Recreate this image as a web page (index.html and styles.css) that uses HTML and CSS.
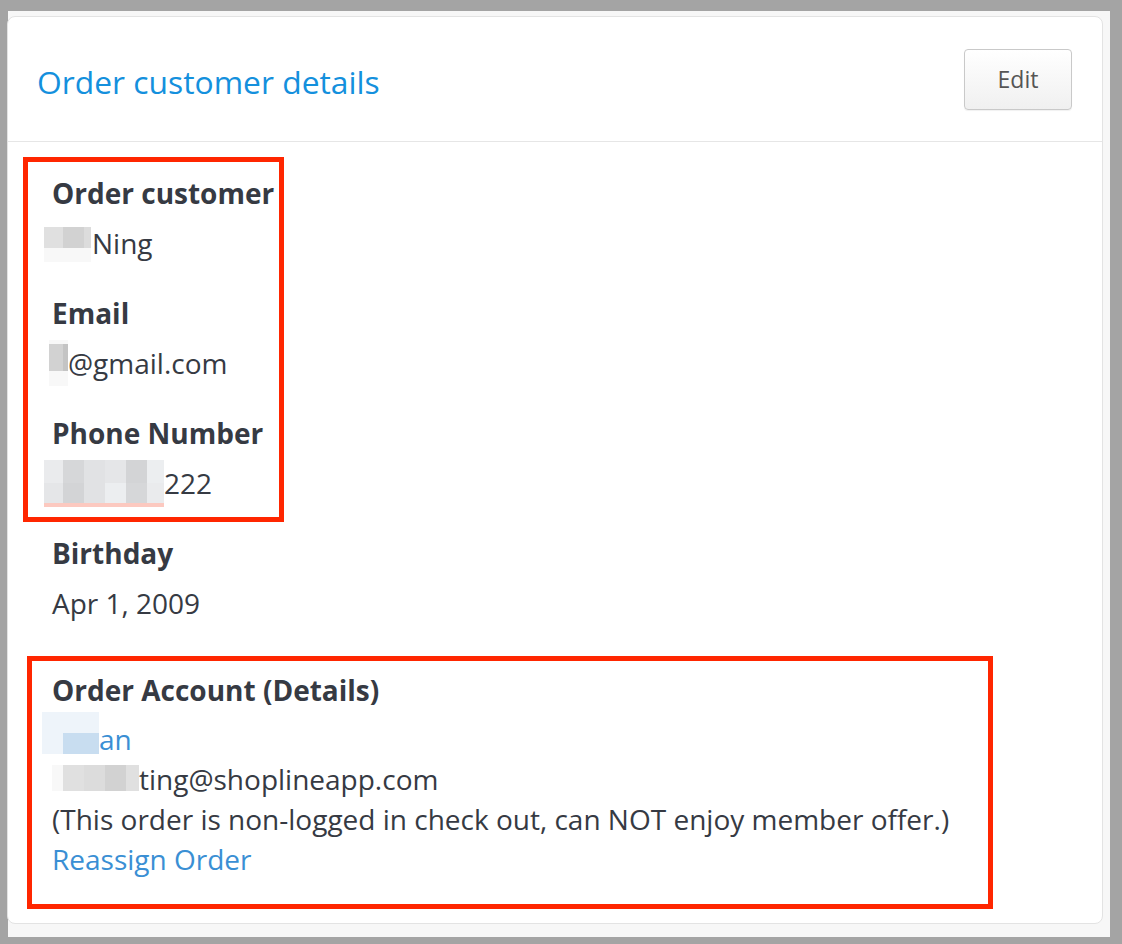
FILE: index.html
```html
<!DOCTYPE html>
<html lang="en">
<head>
    <meta charset="UTF-8">
    <title>Order customer details</title>
    <link rel="stylesheet" href="styles.css">
</head>
<body>
<div class="page">
    <div class="card">
        <!-- Header -->
        <div class="card-header">
            <h2 class="card-title">Order customer details</h2>
            <button class="btn-edit">Edit</button>
        </div>

        <div class="card-body">
            <div class="field">
                <div class="field-label">Order customer</div>
                <div class="field-value">
                    <span class="mosaic mosaic-name">
                        <i class="c1"></i><i class="c2"></i><i class="c3"></i>
                        <i class="c4"></i><i class="c4"></i><i class="c4"></i>
                    </span>Ning
                </div>
            </div>
            <div class="field">
                <div class="field-label">Email</div>
                <div class="field-value">
                    <span class="mosaic mosaic-email">
                        <i class="c4"></i><i class="c4"></i>
                        <i class="c2"></i><i class="c5"></i>
                        <i class="c4"></i><i class="c4"></i>
                    </span>@gmail.com
                </div>
            </div>
            <div class="field">
                <div class="field-label">Phone Number</div>
                <div class="field-value">
                    <span class="mosaic mosaic-phone">
                        <i class="p1"></i><i class="p2"></i><i class="p3"></i><i class="p4"></i><i class="p5"></i><i class="p6"></i>
                        <i class="p4"></i><i class="p5"></i><i class="p3"></i><i class="p6"></i><i class="p2"></i><i class="p1"></i>
                    </span>222
                </div>
            </div>
            <div class="field">
                <div class="field-label">Birthday</div>
                <div class="field-value">Apr 1, 2009</div>
            </div>

            <div class="account">
                <div class="field-label">Order Account (Details)</div>
                <div class="account-line">
                    <a href="#" class="link"><span class="mosaic mosaic-account">
                        <i class="b1"></i><i class="b1"></i><i class="b1"></i>
                        <i class="b1"></i><i class="b2"></i><i class="b2"></i>
                    </span>an</a>
                </div>
                <div class="account-line">
                    <span class="mosaic mosaic-mail">
                        <i class="c4"></i><i class="c1"></i><i class="c3"></i><i class="c2"></i><i class="c1"></i>
                    </span>ting@shoplineapp.com
                </div>
                <div class="account-line">(This order is non-logged in check out, can NOT enjoy member offer.)</div>
                <div class="account-line"><a href="#" class="link">Reassign Order</a></div>
            </div>
        </div>

        <!-- annotation boxes -->
        <div class="annot annot-customer"></div>
        <div class="annot annot-account"></div>
    </div>
</div>
</body>
</html>
```

FILE: styles.css
```css
/* General Page Styling */
body {
    margin: 0;
    padding: 0;
    background-color: #a4a4a4;
    font-family: 'Open Sans', 'Noto Sans', sans-serif;
    color: #363a43;
}

.page {
    margin: 11px 12px 0 8px;
    height: 926px;
    background-color: #f7f7f7;
    padding-top: 5px;
    box-sizing: border-box;
}

/* Card */
.card {
    position: relative;
    margin: 0 7px 0 -1px;
    height: 908px;
    box-sizing: border-box;
    background: #fff;
    border: 1px solid #e3e3e3;
    border-radius: 8px;
}

.card-header {
    display: flex;
    justify-content: space-between;
    align-items: center;
    height: 124px;
    padding: 0 30px 0 29px;
    border-bottom: 1px solid #e6e6e6;
}

.card-title {
    margin: 0;
    font-size: 31.8px;
    font-weight: normal;
    color: #1490dd;
    padding-top: 4px;
}

.btn-edit {
    width: 108px;
    height: 61px;
    font-family: inherit;
    font-size: 23px;
    color: #555;
    background: linear-gradient(#ffffff, #f0f0f0);
    border: 1px solid #c9c9c9;
    border-radius: 4px;
    box-shadow: 0 1px 1px rgba(0, 0, 0, 0.06);
    cursor: pointer;
}

/* Body */
.card-body {
    padding: 31px 44px 0 44px;
    font-size: 28px;
    line-height: 40px;
}

.field {
    margin-bottom: 30px;
}

.field-label {
    font-weight: bold;
    color: #363a43;
}

.field-value {
    margin-top: 10px;
    color: #363a43;
}

.account {
    margin-top: 47px;
}

.account .field-label {
    margin-bottom: 9px;
}

.account-line {
    color: #363a43;
}

.link {
    color: #3a8fd4;
    text-decoration: none;
}

/* Pixelated placeholders (kept out of the line height) */
.mosaic {
    display: inline-grid;
    vertical-align: top;
    margin-bottom: -20px;
}

.mosaic i {
    display: block;
}

.mosaic-name {
    grid-template-columns: 19px 21px 7px;
    grid-template-rows: 21px 14px;
    margin-top: 4px;
    margin-left: -8px;
    margin-right: 1px;
}

.mosaic-email {
    grid-template-columns: 14px 5px;
    grid-template-rows: 4px 27px 15px;
    margin-top: -3px;
    margin-left: -3px;
}

.mosaic-phone {
    grid-template-columns: 19px 21px 21px 21px 21px 17px;
    grid-template-rows: 23px 20px;
    margin-top: -3px;
    margin-left: -8px;
    border-bottom: 4px solid #fcc9c0;
}

.mosaic-account {
    grid-template-columns: 21px 21px 15px;
    grid-template-rows: 21px 21px;
    margin-top: -7px;
    margin-left: -10px;
}

.mosaic-mail {
    grid-template-columns: 11px 21px 21px 21px 13px;
    grid-template-rows: 26px;
    margin-top: 6px;
}

.c1 { background: #e0e0e0; }
.c2 { background: #d2d2d2; }
.c3 { background: #dcdcdc; }
.c4 { background: #f8f8f8; }
.c5 { background: #c4c4c4; }

.p1 { background: #eaebed; }
.p2 { background: #d6d7d9; }
.p3 { background: #e1e2e4; }
.p4 { background: #e5e6e8; }
.p5 { background: #d3d4d6; }
.p6 { background: #eceef0; }

.b1 { background: #eef4fa; }
.b2 { background: #c8ddf0; }

/* Red annotation boxes */
.annot {
    position: absolute;
    border: 5px solid #ff2600;
    box-sizing: border-box;
    pointer-events: none;
}

.annot-customer {
    left: 15px;
    top: 140px;
    width: 261px;
    height: 365px;
}

.annot-account {
    left: 19px;
    top: 639px;
    width: 966px;
    height: 253px;
}
```
